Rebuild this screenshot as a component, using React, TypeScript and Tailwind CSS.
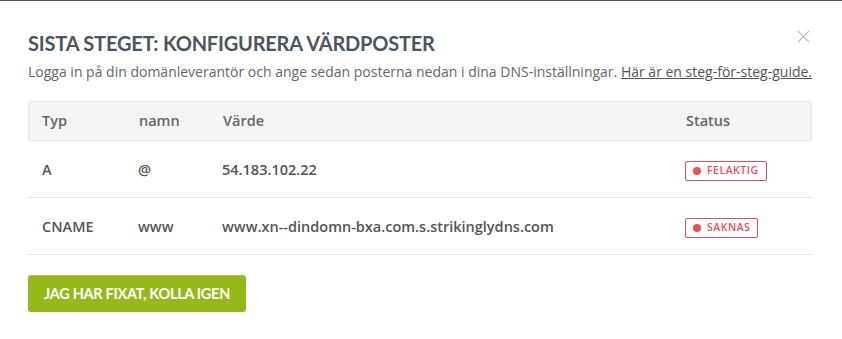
import React from "react";

const rows = [
  { typ: "A", namn: "@", varde: "54.183.102.22", status: "FELAKTIG" },
  { typ: "CNAME", namn: "www", varde: "www.xn--dindomn-bxa.com.s.strikinglydns.com", status: "SAKNAS" },
];

export default function App() {
  return (
    <div className="w-[842px] h-[339px] bg-white border-t border-[#555] overflow-hidden" style={{ fontFamily: "'Open Sans', sans-serif" }}>
      <div className="relative px-7 pt-[28px]">
        <button className="absolute right-[31px] top-[28px] w-[15px] h-[15px] text-[#b5b5b5]">
          <svg viewBox="0 0 16 16" className="w-[15px] h-[15px]" fill="none" stroke="currentColor" strokeWidth="1.1">
            <path d="M2 2 L14 14 M14 2 L2 14" />
          </svg>
        </button>
        <h1 className="text-[20px] leading-[28px] font-bold text-[#4b5661] tracking-[-0.2px]" style={{ fontFamily: "Lato, sans-serif" }}>
          SISTA STEGET: KONFIGURERA VÄRDPOSTER
        </h1>
        <p className="mt-[5px] text-[14px] leading-[20px] text-[#666]">
          Logga in på din domänleverantör och ange sedan posterna nedan i dina DNS-inställningar.{" "}
          <a className="underline text-[#555]">Här är en steg-för-steg-guide.</a>
        </p>
        <div className="mt-[19px] w-[784px]">
          <div className="flex items-center h-[40px] bg-[#f5f5f5] border border-[#e6e6e6] rounded-[3px] text-[14.5px] font-semibold text-[#666]">
            <div className="w-[110px] pl-[13px]">Typ</div>
            <div className="w-[84px]">namn</div>
            <div className="w-[463px]">Värde</div>
            <div>Status</div>
          </div>
          {rows.map((r) => (
            <div key={r.typ} className="flex items-center h-[57px] pt-[1px] border-b border-[#e6e6e6] text-[14.5px] font-semibold text-[#555]">
              <div className="w-[110px] pl-[14px]">{r.typ}</div>
              <div className="w-[84px]">{r.namn}</div>
              <div className="w-[463px]">{r.varde}</div>
              <div>
                <span className="inline-flex items-center gap-[6px] h-[20px] px-[7px] border border-[#e5505c] rounded-[2px] text-[10.5px] font-semibold tracking-[0.5px] text-[#e5505c]">
                  <span className="w-[8px] h-[8px] rounded-full bg-[#e5505c]" />
                  {r.status}
                </span>
              </div>
            </div>
          ))}
        </div>
        <button className="mt-[20px] h-[37px] w-[218px] rounded-[3px] bg-[#95b91a] border-t border-[#a5c63a] text-white text-[14.5px] font-bold tracking-[-0.3px]" style={{ fontFamily: "Lato, sans-serif" }}>
          JAG HAR FIXAT, KOLLA IGEN
        </button>
      </div>
    </div>
  );
}
